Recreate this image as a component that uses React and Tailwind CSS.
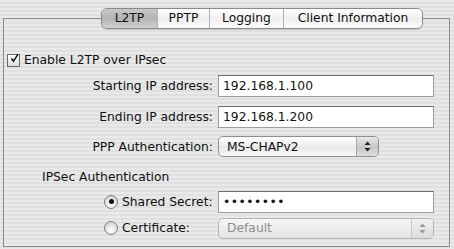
import React from "react";

const font = { fontFamily: '"DejaVu Sans", "Noto Sans", sans-serif' };

function Arrows({ disabled }) {
  const c = disabled ? "#9a9a9a" : "#222";
  return (
    <svg width="7" height="11" viewBox="0 0 7 11">
      <path d="M3.5 0.5 L6.5 4 L0.5 4 Z" fill={c} />
      <path d="M3.5 10.5 L6.5 7 L0.5 7 Z" fill={c} />
    </svg>
  );
}

function Popup({ label, width, disabled }) {
  return (
    <div
      className={
        "flex h-[21px] items-stretch rounded-[5px] border " +
        (disabled
          ? "border-[#b4b4b4] bg-[linear-gradient(180deg,#f6f6f6,#e4e4e4)] text-[#8c8c8c]"
          : "border-[#8f8f8f] bg-[linear-gradient(180deg,#ffffff,#eaeaea_55%,#f6f6f6)] text-[#111]")
      }
      style={{ width }}
    >
      <div className="flex flex-1 items-center pl-[8px]">{label}</div>
      <div
        className={
          "flex w-[22px] items-center justify-center rounded-r-[4px] border-l " +
          (disabled
            ? "border-[#c8c8c8] bg-[linear-gradient(180deg,#f0f0f0,#dcdcdc)]"
            : "border-[#a8a8a8] bg-[linear-gradient(180deg,#e8e8e8,#c6c6c6_55%,#dedede)]")
        }
      >
        <Arrows disabled={disabled} />
      </div>
    </div>
  );
}

function Field({ value, width }) {
  return (
    <div
      className="flex h-[22px] items-center border border-[#9c9c9c] border-t-[#6e6e6e] bg-white pl-[4px] text-[#111]"
      style={{ width }}
    >
      {value}
    </div>
  );
}

function Radio({ on }) {
  return (
    <div className="flex h-[14px] w-[14px] items-center justify-center rounded-full border border-[#7c7c7c] bg-[radial-gradient(circle_at_50%_70%,#ffffff,#e0e0e0_60%,#c4c4c4)]">
      {on && <div className="h-[5px] w-[5px] rounded-full bg-[#111]" />}
    </div>
  );
}

export default function App() {
  const tabs = [
    { t: "L2TP", w: 55, sel: true },
    { t: "PPTP", w: 52 },
    { t: "Logging", w: 74 },
    { t: "Client Information", w: 139 },
  ];
  return (
    <div
      className="h-[249px] w-[454px] overflow-hidden bg-[repeating-linear-gradient(180deg,#e9e9e9_0px,#e9e9e9_2px,#e0e0e0_2px,#e0e0e0_4px)] pt-[18px] text-[12.3px] text-[#111]"
      style={font}
    >
      <div className="relative ml-[3px] h-[229px] w-[447px] border border-[#8a8a8a] border-t-[#8f8f8f]">
        <div className="absolute left-[97px] top-[-11px] flex h-[21px] overflow-hidden rounded-[6px] border border-[#8a8a8a] shadow-[0_1px_1px_rgba(0,0,0,0.15)]">
          {tabs.map((tb, i) => (
            <div
              key={tb.t}
              className={
                "flex items-center justify-center " +
                (i > 0 ? "border-l border-[#b0b0b0] " : "") +
                (tb.sel
                  ? "bg-[linear-gradient(180deg,#c8c8c8,#b4b4b4_50%,#d0d0d0)]"
                  : "bg-[linear-gradient(180deg,#ffffff,#f0f0f0_50%,#fafafa)]")
              }
              style={{ width: tb.w }}
            >
              {tb.t}
            </div>
          ))}
        </div>

        <div className="flex flex-col pt-[32px]">
          <div className="flex items-center gap-[4px] pl-[3px]">
            <div className="flex h-[13px] w-[13px] items-center justify-center border border-[#6a6a6a] bg-[linear-gradient(180deg,#ffffff,#dcdcdc)]">
              <svg width="13" height="13" viewBox="0 0 13 13" className="-mt-[3px] ml-[2px]">
                <path d="M2 6.5 L5 10.5 L11.5 0.5" fill="none" stroke="#111" strokeWidth="2.2" />
              </svg>
            </div>
            <span>Enable L2TP over IPsec</span>
          </div>

          <div className="mt-[6px] flex items-center">
            <div className="w-[209px] text-right">Starting IP address:</div>
            <div className="ml-[5px]">
              <Field value="192.168.1.100" width={216} />
            </div>
          </div>

          <div className="mt-[9px] flex items-center">
            <div className="w-[209px] text-right">Ending IP address:</div>
            <div className="ml-[5px]">
              <Field value="192.168.1.200" width={216} />
            </div>
          </div>

          <div className="mt-[8px] flex items-center">
            <div className="w-[209px] text-right">PPP Authentication:</div>
            <div className="ml-[5px]">
              <Popup label="MS-CHAPv2" width={161} />
            </div>
          </div>

          <div className="mt-[11px] pl-[38px]">IPSec Authentication</div>

          <div className="mt-[4px] flex items-center">
            <div className="flex w-[214px] items-center gap-[4px] pl-[100px]">
              <Radio on />
              <span>Shared Secret:</span>
            </div>
            <Field value={<span className="tracking-[0.5px]">••••••••</span>} width={216} />
          </div>

          <div className="mt-[5px] flex items-center">
            <div className="flex w-[214px] items-center gap-[4px] pl-[100px]">
              <Radio />
              <span>Certificate:</span>
            </div>
            <Popup label="Default" width={216} disabled />
          </div>
        </div>
      </div>
    </div>
  );
}
